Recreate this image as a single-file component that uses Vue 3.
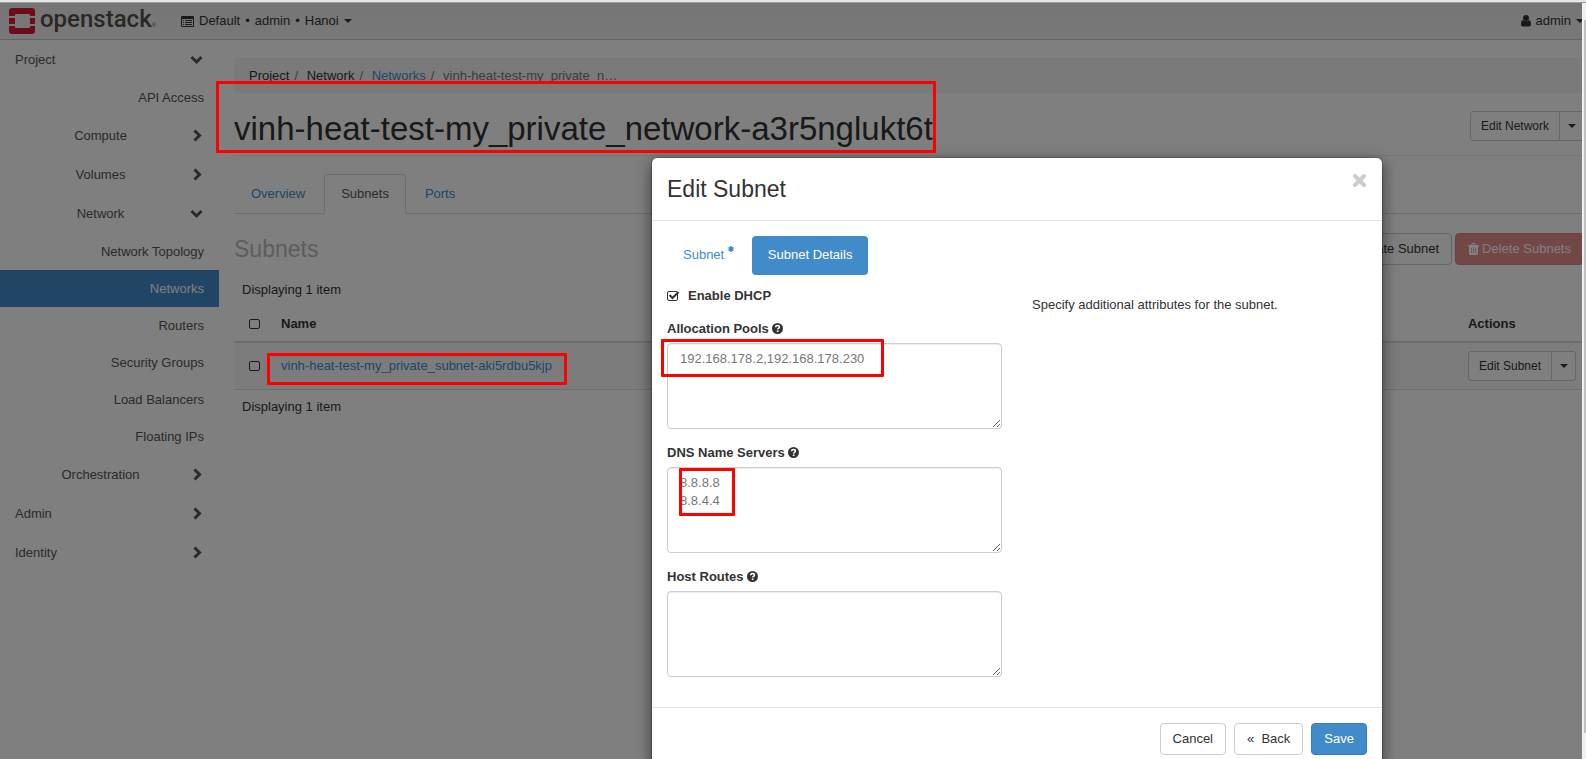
<script setup>
import { ref } from 'vue'

const context = ['Default', '•', 'admin', '•', 'Hanoi']

const nav = [
  { label: 'Project', kind: 'root', open: true },
  { label: 'API Access', kind: 'link' },
  { label: 'Compute', kind: 'group', open: false },
  { label: 'Volumes', kind: 'group', open: false },
  { label: 'Network', kind: 'group', open: true },
  { label: 'Network Topology', kind: 'link' },
  { label: 'Networks', kind: 'link', active: true },
  { label: 'Routers', kind: 'link' },
  { label: 'Security Groups', kind: 'link' },
  { label: 'Load Balancers', kind: 'link' },
  { label: 'Floating IPs', kind: 'link' },
  { label: 'Orchestration', kind: 'group', open: false },
  { label: 'Admin', kind: 'root', open: false },
  { label: 'Identity', kind: 'root', open: false }
]

const dhcp = ref(true)
const fields = ref([
  { id: 'pools', label: 'Allocation Pools', value: '192.168.178.2,192.168.178.230', mark: 'mark-pools' },
  { id: 'dns', label: 'DNS Name Servers', value: '8.8.8.8\n8.8.4.4', mark: 'mark-dns' },
  { id: 'routes', label: 'Host Routes', value: '', mark: '' }
])
</script>

<template>
  <div class="window">
    <div class="frame-top"></div>
    <div class="viewport">
      <div class="page">
        <header class="navbar">
          <a class="brand" href="#">
            <svg class="brand-mark" viewBox="0 0 26 26" aria-hidden="true">
              <path fill="#da1a32" d="M3 0h20a3 3 0 0 1 3 3v5h-5V7a1 1 0 0 0-1-1H7a1 1 0 0 0-1 1v1H0V3a3 3 0 0 1 3-3z" />
              <path fill="#da1a32" d="M0 18h6v1a1 1 0 0 0 1 1h13a1 1 0 0 0 1-1v-1h5v5a3 3 0 0 1-3 3H3a3 3 0 0 1-3-3z" />
              <path fill="#da1a32" d="M0 10h6v6H0zM21 10h5v6h-5z" />
            </svg>
            <span class="brand-name">openstack</span><span class="brand-reg">®</span>
          </a>
          <button class="nav-button" type="button">
            <svg class="list-icon" viewBox="0 0 13 11" aria-hidden="true">
              <path fill="#333" fill-rule="evenodd" d="M1 0h11a1 1 0 0 1 1 1v9a1 1 0 0 1-1 1H1a1 1 0 0 1-1-1V1a1 1 0 0 1 1-1zM1 3v7h11V3z" />
              <path stroke="#333" d="M2 4.500h1M4 4.500h7M2 6.500h1M4 6.500h7M2 8.500h1M4 8.500h7" />
            </svg>
            <span v-for="(part, i) in context" :key="i">{{ part }}</span>
            <i class="caret"></i>
          </button>
          <button class="nav-button user-button" type="button">
            <svg class="user-icon" viewBox="0 0 10 12" aria-hidden="true">
              <circle cx="5" cy="3" r="3" fill="#333" />
              <path fill="#333" d="M2 5c1.600 1.600 4.400 1.600 6 0 1.500.4 2 2 2 4.500 0 1-.8 2-2 2H2c-1.200 0-2-1-2-2C0 7 .5 5.400 2 5z" />
            </svg>
            <span>admin</span>
            <i class="caret"></i>
          </button>
        </header>

        <div class="columns">
          <nav class="sidebar">
            <a
              v-for="item in nav"
              :key="item.label"
              href="#"
              class="nav-item"
              :class="[item.kind, { active: item.active }]"
            >
              <span class="nav-label">{{ item.label }}</span>
              <svg v-if="item.kind !== 'link'" class="chevron" viewBox="0 0 13 13" aria-hidden="true">
                <path :d="item.open ? 'M1.500 4l5 5 5-5' : 'M4.500 1.500l5 5-5 5'" fill="none" stroke="#555" stroke-width="3" />
              </svg>
            </a>
          </nav>

          <main class="content">
            <ol class="breadcrumb">
              <li>Project</li>
              <li>Network</li>
              <li><a href="#">Networks</a></li>
              <li class="current">vinh-heat-test-my_private_n…</li>
            </ol>

            <div class="page-header">
              <div class="title-wrap">
                <h1>vinh-heat-test-my_private_network-a3r5nglukt6t</h1>
                <span class="mark mark-title"></span>
              </div>
              <div class="split">
                <button type="button" class="btn small">Edit Network</button>
                <button type="button" class="btn small toggle" aria-label="More network actions"><i class="caret"></i></button>
              </div>
            </div>

            <ul class="tabs">
              <li><a href="#">Overview</a></li>
              <li><a href="#" class="selected">Subnets</a></li>
              <li><a href="#">Ports</a></li>
            </ul>

            <div class="toolbar">
              <h3>Subnets</h3>
              <button type="button" class="btn">Create Subnet</button>
              <button type="button" class="btn danger" disabled>
                <svg class="trash" viewBox="0 0 11 12" aria-hidden="true">
                  <path fill="#fff" fill-rule="evenodd" d="M0 2h3l1-2h3l1 2h3v1.500h-1V11a1 1 0 0 1-1 1H2a1 1 0 0 1-1-1V3.500H0zM4.200 2h2.600l-.5-1H4.700zM3 5v5h.6V5zM5.200 5v5h.6V5zM7.400 5v5H8V5z" />
                </svg>
                Delete Subnets
              </button>
            </div>

            <p class="count">Displaying 1 item</p>
            <table>
              <thead>
                <tr>
                  <th class="pick"><input type="checkbox" class="box" aria-label="Select all subnets" /></th>
                  <th>Name</th>
                  <th class="actions">Actions</th>
                </tr>
              </thead>
              <tbody>
                <tr>
                  <td class="pick"><input type="checkbox" class="box" aria-label="Select subnet" /></td>
                  <td>
                    <span class="link-wrap">
                      <a href="#">vinh-heat-test-my_private_subnet-aki5rdbu5kjp</a>
                      <span class="mark mark-link"></span>
                    </span>
                  </td>
                  <td class="actions">
                    <div class="split">
                      <button type="button" class="btn small">Edit Subnet</button>
                      <button type="button" class="btn small toggle" aria-label="More subnet actions"><i class="caret"></i></button>
                    </div>
                  </td>
                </tr>
              </tbody>
            </table>
            <p class="count">Displaying 1 item</p>
          </main>
        </div>

        <div class="backdrop"></div>

        <form class="modal" role="dialog" aria-labelledby="dialog-title" @submit.prevent>
          <div class="modal-header">
            <h3 id="dialog-title">Edit Subnet</h3>
            <button type="button" class="close" aria-label="Close">
              <svg viewBox="0 0 15 15" aria-hidden="true">
                <path d="M3 3l9 9M12 3l-9 9" stroke="#ccc" stroke-width="4" stroke-linecap="round" />
              </svg>
            </button>
          </div>
          <div class="modal-body">
            <ul class="pills">
              <li><a href="#">Subnet <svg class="required" viewBox="0 0 6 6" aria-hidden="true"><path d="M3 0v6M.5 1.500l5 3M5.500 1.500l-5 3" stroke="#428bca" stroke-width="1.500" /></svg></a></li>
              <li><a href="#" class="selected">Subnet Details</a></li>
            </ul>
            <div class="form-grid">
              <div>
                <div class="check-row">
                  <span class="check-wrap">
                    <input id="dhcp" v-model="dhcp" type="checkbox" class="box" />
                    <svg v-if="dhcp" class="tick" viewBox="0 0 12 10" aria-hidden="true">
                      <path d="M2.500 4l3 3 6-6" fill="none" stroke="#333" stroke-width="2" />
                    </svg>
                  </span>
                  <label for="dhcp">Enable DHCP</label>
                </div>
                <div v-for="field in fields" :key="field.id" class="field">
                  <label :for="field.id">
                    {{ field.label }}
                    <svg class="help" viewBox="0 0 11 11" aria-hidden="true">
                      <circle cx="5.500" cy="5.500" r="5.500" fill="#333" />
                      <path d="M3.700 4.300c0-2.300 3.700-2.200 3.700-.1 0 1.300-1.700 1.200-1.700 2.400" fill="none" stroke="#fff" stroke-width="1.500" />
                      <path d="M4.800 7.500h1.700v1.500H4.800z" fill="#fff" />
                    </svg>
                  </label>
                  <textarea :id="field.id" v-model="field.value" rows="4" spellcheck="false"></textarea>
                  <span v-if="field.mark" class="mark" :class="field.mark"></span>
                </div>
              </div>
              <p class="hint">Specify additional attributes for the subnet.</p>
            </div>
          </div>
          <div class="modal-footer">
            <button type="button" class="btn">Cancel</button>
            <button type="button" class="btn">«&nbsp; Back</button>
            <button type="submit" class="btn primary">Save</button>
          </div>
        </form>
      </div>
      <div class="scrollbar"><div class="thumb"></div></div>
    </div>
  </div>
</template>

<style>
body {
  margin: 0;
}
</style>

<style scoped>
.window {
  display: flex;
  flex-direction: column;
  height: 100vh;
  overflow: hidden;
  background: #fff;
  color: #333;
  font-family: "Liberation Sans", Arial, sans-serif;
  font-size: 13px;
  line-height: 18px;
}
.window * {
  box-sizing: border-box;
}
.frame-top {
  flex: none;
  height: 3px;
  background: #e6e6e6;
  border-bottom: 1px solid #9c9c9c;
}
.viewport {
  display: flex;
  flex: 1;
  min-height: 0;
}
.page {
  position: relative;
  flex: 1;
  min-width: 0;
  overflow: hidden;
}
.scrollbar {
  width: 4px;
  padding: 17px 0 26px 2px;
  background: #f1f1f1;
}
.thumb {
  height: 100%;
  background: #c1c1c1;
}
a {
  color: #428bca;
  text-decoration: none;
}
button {
  font: inherit;
  color: inherit;
  cursor: pointer;
}
h1,
h3,
p,
ul,
ol {
  margin: 0;
  padding: 0;
  font-weight: 400;
  list-style: none;
}

/* Top bar */
.navbar {
  display: flex;
  align-items: center;
  height: 37px;
  margin-right: -2px;
  padding-left: 9px;
  background: linear-gradient(#ebebeb, #f2f2f2);
  border-bottom: 1px solid #c8c8c8;
}
.brand {
  display: flex;
  align-items: center;
  width: 172px;
  color: #555049;
}
.brand-mark {
  width: 26px;
  height: 26px;
  margin-right: 5px;
}
.brand-name {
  padding-bottom: 4px;
  font-family: Roboto, "Open Sans", sans-serif;
  font-size: 24px;
  font-weight: 500;
  line-height: 30px;
}
.brand-reg {
  padding-top: 8px;
  font-size: 6px;
  line-height: 8px;
}
.nav-button {
  display: flex;
  align-items: center;
  gap: 5px;
  padding: 0;
  background: none;
  border: 0;
}
.list-icon {
  width: 13px;
  height: 11px;
}
.user-button {
  margin-left: auto;
}
.user-icon {
  width: 10px;
  height: 12px;
}
.caret {
  display: block;
  border: 4px solid transparent;
  border-top-color: #333;
  border-bottom: 0;
}

/* Side menu */
.columns {
  display: flex;
}
.sidebar {
  flex: none;
  width: 219px;
}
.nav-item {
  display: flex;
  align-items: center;
  height: 39px;
  padding: 0 15px;
  color: #555;
}
.nav-label {
  flex: 1;
}
.nav-item.group .nav-label {
  padding-right: 4px;
  text-align: center;
}
.nav-item.link {
  height: 37px;
  text-align: right;
}
.nav-item.active {
  background: #428bca;
  color: #fff;
}
.chevron {
  width: 13px;
  height: 13px;
  margin-right: 1px;
}

/* Main column */
.content {
  flex: 1;
  min-width: 0;
  margin: 18px -2px 0 15px;
}
.breadcrumb {
  display: flex;
  padding: 9px 15px 8px;
  background: #f5f5f5;
  border-radius: 4px;
}
.breadcrumb li + li::before {
  content: "/\00a0";
  padding: 0 5px;
  color: #777;
}
.current {
  color: #777;
}
.page-header {
  display: flex;
  justify-content: space-between;
  align-items: flex-start;
  margin-top: 18px;
  padding-bottom: 8px;
  border-bottom: 1px solid #eee;
}
.title-wrap {
  position: relative;
}
h1 {
  font-size: 33px;
  line-height: 36px;
}
.tabs {
  display: flex;
  gap: 2px;
  margin-top: 18px;
  border-bottom: 1px solid #ddd;
}
.tabs a {
  display: block;
  margin-bottom: -1px;
  padding: 10px 16px;
  border: 1px solid transparent;
  border-radius: 4px 4px 0 0;
}
.tabs .selected {
  color: #555;
  background: #fff;
  border-color: #ddd;
  border-bottom-color: #fff;
}
.toolbar {
  display: flex;
  gap: 3px;
  margin-top: 19px;
}
.toolbar h3 {
  flex: 1;
  color: #bbb;
}
h3 {
  font-size: 23px;
  line-height: 32px;
}
.btn {
  display: flex;
  align-items: center;
  justify-content: center;
  height: 32px;
  padding: 0 12px;
  background: #fff;
  border: 1px solid #ccc;
  border-radius: 4px;
  white-space: nowrap;
}
.btn.small {
  height: 30px;
  padding: 0 10px;
  font-size: 12px;
  border-radius: 3px;
}
.split {
  display: flex;
}
.split .btn:first-child {
  border-radius: 3px 0 0 3px;
}
.split .toggle {
  width: 25px;
  margin-left: -1px;
  padding: 0;
  border-radius: 0 3px 3px 0;
}
.actions .split {
  justify-content: flex-end;
}
.btn.danger {
  gap: 3px;
  background: #d9534f;
  border-color: #d43f3a;
  color: #fff;
  opacity: 0.65;
}
.trash {
  width: 11px;
  height: 12px;
}
.btn.primary {
  background: #428bca;
  border-color: #357ebd;
  color: #fff;
}
.count {
  padding: 8px;
}
.toolbar + .count {
  margin-top: 8px;
}
table {
  width: 100%;
  border-spacing: 0;
}
th,
td {
  padding: 8px;
  text-align: left;
}
th {
  border-bottom: 2px solid #ddd;
}
td {
  background: #f9f9f9;
  border-bottom: 1px solid #ddd;
}
.pick {
  width: 39px;
  padding: 8px 13px 8px 15px;
}
.actions {
  width: 124px;
}
.box {
  display: block;
  width: 11px;
  height: 10px;
  margin: 0;
  appearance: none;
  border: 1px solid #333;
  border-radius: 2px;
}
.link-wrap {
  position: relative;
}

/* Highlight frames */
.mark {
  position: absolute;
  z-index: 3;
  border: 3px solid #f00;
  border-radius: 1px;
  pointer-events: none;
}
.mark-title {
  inset: -30px -3px -6px -18px;
}
.mark-link {
  inset: -5px -15px -12px -14px;
}
.mark-pools {
  top: 19px;
  left: -6px;
  width: 223px;
  height: 38px;
}
.mark-dns {
  top: 24px;
  left: 12px;
  width: 56px;
  height: 48px;
}

/* Dialog */
.backdrop {
  position: absolute;
  inset: 0;
  z-index: 1;
  background: rgba(0, 0, 0, 0.5);
}
.modal {
  position: absolute;
  z-index: 2;
  top: 154px;
  left: 651px;
  width: 732px;
  background: #fff;
  background-clip: padding-box;
  border: 1px solid rgba(0, 0, 0, 0.2);
  border-radius: 6px;
  box-shadow: 0 5px 15px rgba(0, 0, 0, 0.5);
}
.modal-header {
  display: flex;
  justify-content: space-between;
  align-items: flex-start;
  padding: 15px;
  border-bottom: 1px solid #e5e5e5;
}
.close {
  padding: 0;
  background: none;
  border: 0;
}
.close svg {
  display: block;
  width: 15px;
  height: 15px;
}
.modal-body {
  padding: 15px;
}
.pills {
  display: flex;
  gap: 2px;
}
.pills a {
  display: block;
  padding: 10px 16px 11px;
  border-radius: 4px;
}
.pills .selected {
  background: #428bca;
  color: #fff;
}
.required {
  width: 6px;
  height: 6px;
  vertical-align: 7px;
}
.form-grid {
  display: grid;
  grid-template-columns: 1fr 1fr;
  gap: 30px;
  margin-top: 12px;
}
.check-row {
  display: flex;
  align-items: center;
  gap: 10px;
  margin-bottom: 15px;
  font-weight: 700;
}
.check-wrap {
  position: relative;
}
.tick {
  position: absolute;
  top: 0;
  left: 0;
  width: 12px;
  height: 10px;
  pointer-events: none;
}
.field {
  position: relative;
  margin-bottom: 15px;
}
.field label {
  display: block;
  margin-bottom: 5px;
  font-weight: 700;
}
.help {
  width: 11px;
  height: 11px;
  vertical-align: -1px;
}
textarea {
  display: block;
  width: 100%;
  height: 86px;
  padding: 6px 12px;
  color: #777;
  font: inherit;
  background: #fff;
  border: 1px solid #ccc;
  border-radius: 4px;
  box-shadow: inset 0 1px 1px rgba(0, 0, 0, 0.08);
}
.hint {
  padding-top: 9px;
}
.modal-footer {
  display: flex;
  justify-content: flex-end;
  gap: 8px;
  padding: 15px;
  border-top: 1px solid #e5e5e5;
}
</style>
